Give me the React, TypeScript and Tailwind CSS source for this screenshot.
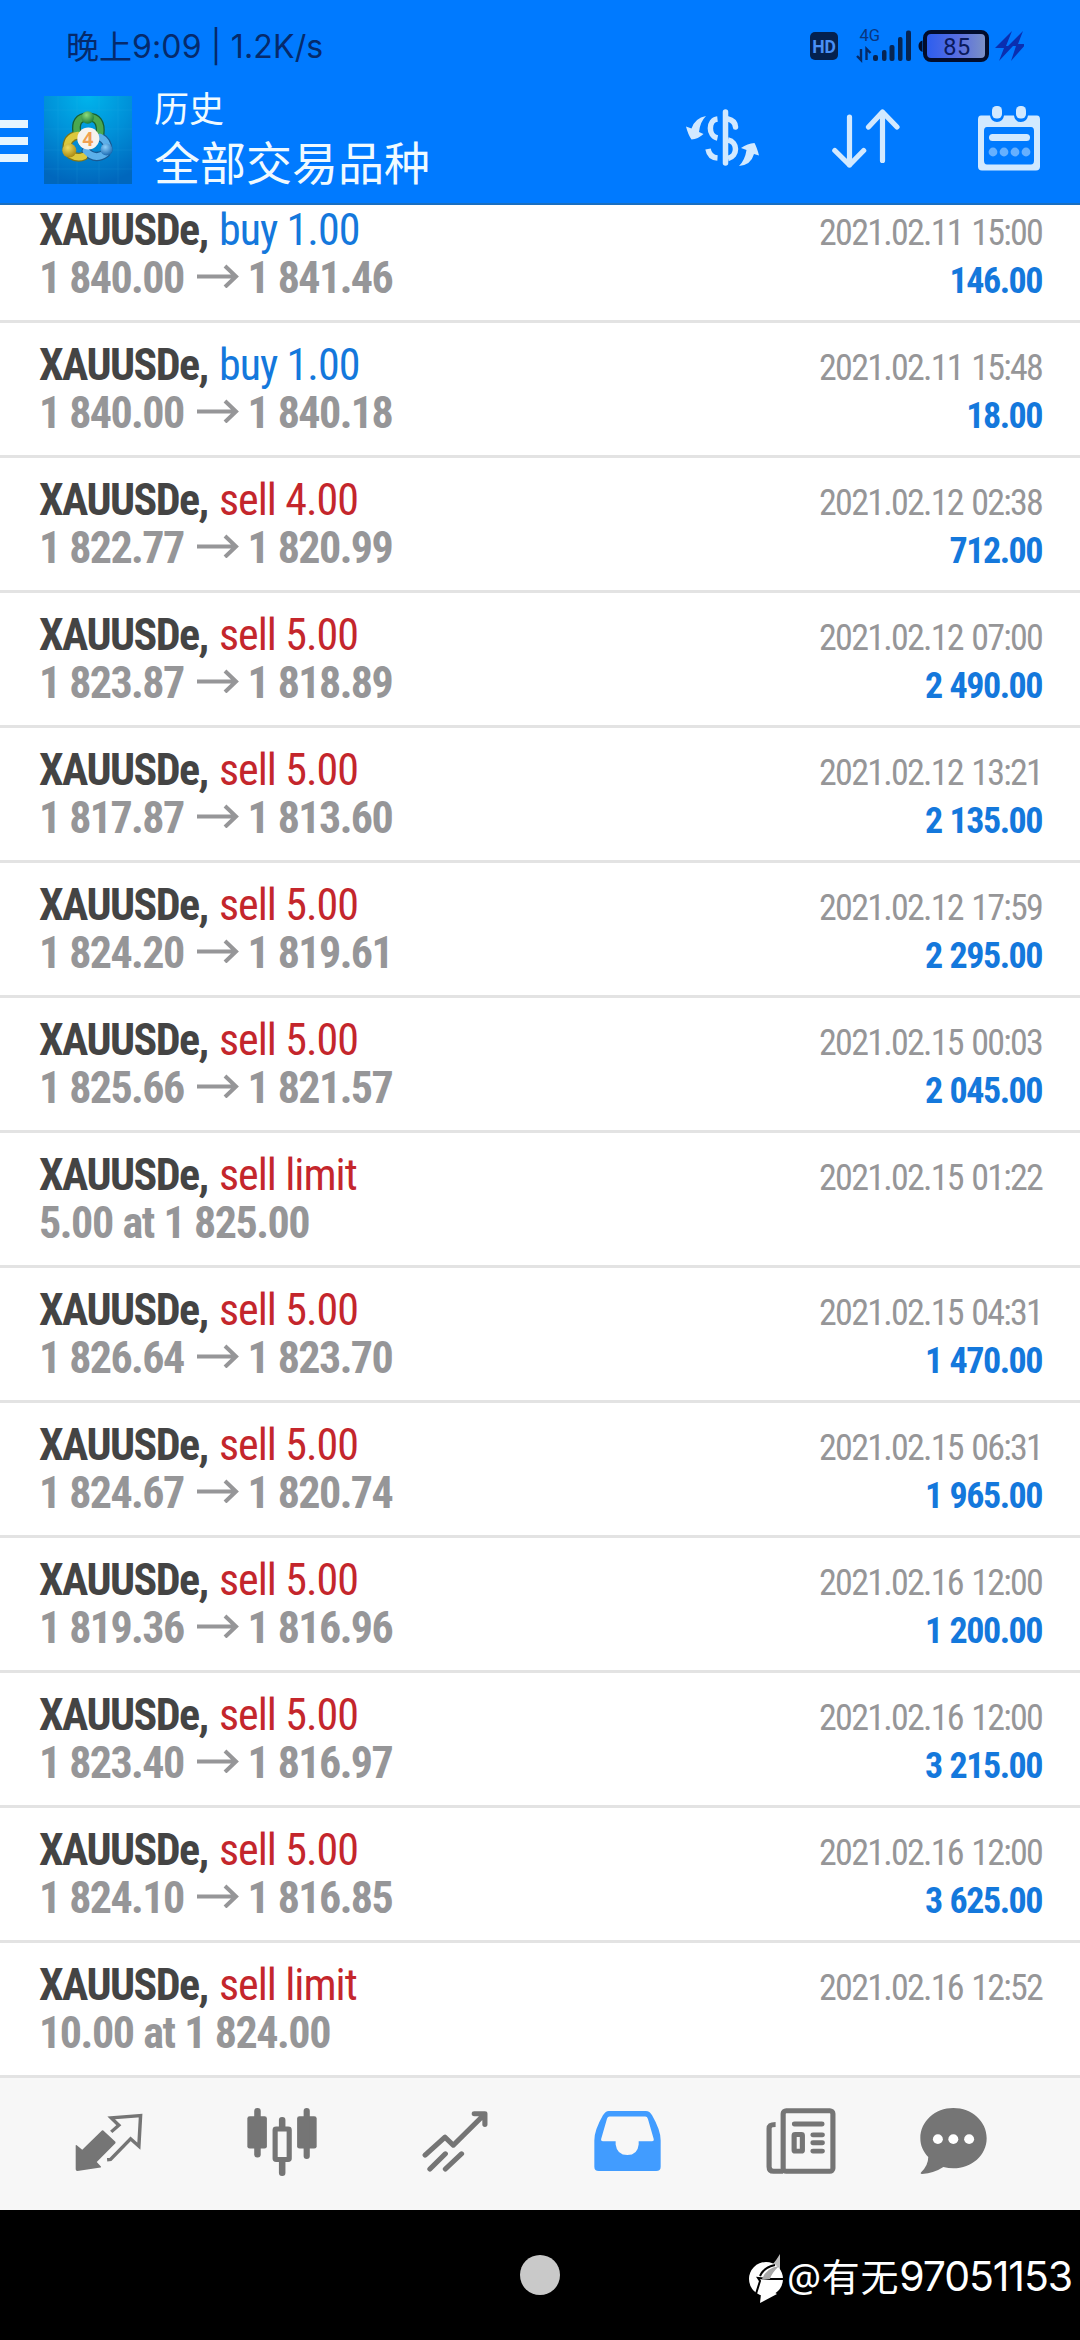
import React from 'react';

interface Deal {
  side: 'buy' | 'sell';
  label: string;
  from?: string;
  to?: string;
  note?: string;
  time: string;
  profit?: string;
}

const deals: Deal[] = [
  { side: 'buy', label: 'buy 1.00', from: '1 840.00', to: '1 841.46', time: '2021.02.11 15:00', profit: '146.00' },
  { side: 'buy', label: 'buy 1.00', from: '1 840.00', to: '1 840.18', time: '2021.02.11 15:48', profit: '18.00' },
  { side: 'sell', label: 'sell 4.00', from: '1 822.77', to: '1 820.99', time: '2021.02.12 02:38', profit: '712.00' },
  { side: 'sell', label: 'sell 5.00', from: '1 823.87', to: '1 818.89', time: '2021.02.12 07:00', profit: '2 490.00' },
  { side: 'sell', label: 'sell 5.00', from: '1 817.87', to: '1 813.60', time: '2021.02.12 13:21', profit: '2 135.00' },
  { side: 'sell', label: 'sell 5.00', from: '1 824.20', to: '1 819.61', time: '2021.02.12 17:59', profit: '2 295.00' },
  { side: 'sell', label: 'sell 5.00', from: '1 825.66', to: '1 821.57', time: '2021.02.15 00:03', profit: '2 045.00' },
  { side: 'sell', label: 'sell limit', note: '5.00 at 1 825.00', time: '2021.02.15 01:22' },
  { side: 'sell', label: 'sell 5.00', from: '1 826.64', to: '1 823.70', time: '2021.02.15 04:31', profit: '1 470.00' },
  { side: 'sell', label: 'sell 5.00', from: '1 824.67', to: '1 820.74', time: '2021.02.15 06:31', profit: '1 965.00' },
  { side: 'sell', label: 'sell 5.00', from: '1 819.36', to: '1 816.96', time: '2021.02.16 12:00', profit: '1 200.00' },
  { side: 'sell', label: 'sell 5.00', from: '1 823.40', to: '1 816.97', time: '2021.02.16 12:00', profit: '3 215.00' },
  { side: 'sell', label: 'sell 5.00', from: '1 824.10', to: '1 816.85', time: '2021.02.16 12:00', profit: '3 625.00' },
  { side: 'sell', label: 'sell limit', note: '10.00 at 1 824.00', time: '2021.02.16 12:52' },
];

function StatusIcons() {
  return (
    <svg width="216" height="40" viewBox="0 0 216 40" className="font-['Roboto','Noto_Sans_CJK_SC',sans-serif]">
      <defs>
        <linearGradient id="charge" x1="0" x2="1" y1="0" y2="0">
          <stop offset="0" stopColor="#2a5df0" />
          <stop offset="0.55" stopColor="#5a6fe0" />
          <stop offset="1" stopColor="#7d93c4" />
        </linearGradient>
      </defs>
      <rect x="2" y="5" width="28" height="28" rx="5" fill="#04214f" />
      <text x="16" y="25.500" fontSize="17.500" fontWeight="700" textAnchor="middle" fill="#4a90f5">HD</text>
      <text x="51.500" y="14" fontSize="16.500" fill="#0a3680">4G</text>
      <g stroke="#062a66" strokeWidth="2.400" fill="none">
        <path d="M53 22v11l-4-4M58.500 33v-11l4 4" />
      </g>
      <g fill="#062452">
        <rect x="65" y="28" width="5" height="6" rx="2" />
        <rect x="74" y="23" width="4.500" height="11" rx="2" />
        <rect x="81.500" y="18" width="5" height="16" rx="2" />
        <rect x="90" y="10" width="4.500" height="24" rx="2" />
        <rect x="98" y="3.500" width="5" height="30.500" rx="2" />
      </g>
      <path d="M114.500 13.500q-4 1-4 5.500t4 6z" fill="#020d2c" />
      <rect x="117" y="5" width="62" height="28" rx="6" fill="url(#charge)" stroke="#020d2c" strokeWidth="4" />
      <text x="149" y="27.500" fontSize="23.500" textAnchor="middle" fill="#0a1a5c" letterSpacing="0.500">85</text>
      <path d="M204 4l-17 17h9l-5 13 14-15h-7zM215 4l-15 15h8l-5 15 15-17h-8z" fill="#0a2fb0" />
    </svg>
  );
}

function AppLogo() {
  return (
    <svg width="88" height="88" viewBox="0 0 88 88">
      <defs>
        <radialGradient id="tile" cx="0.5" cy="0" r="1">
          <stop offset="0" stopColor="#00b4ec" />
          <stop offset="0.5" stopColor="#0090d8" />
          <stop offset="1" stopColor="#0067bd" />
        </radialGradient>
        <radialGradient id="greenBall" cx="0.4" cy="0.3" r="0.7">
          <stop offset="0" stopColor="#8fdc7c" />
          <stop offset="1" stopColor="#1c7d3c" />
        </radialGradient>
        <radialGradient id="goldBall" cx="0.4" cy="0.3" r="0.7">
          <stop offset="0" stopColor="#f0dc60" />
          <stop offset="1" stopColor="#a98a14" />
        </radialGradient>
        <radialGradient id="blueBall" cx="0.4" cy="0.3" r="0.7">
          <stop offset="0" stopColor="#8fd0fa" />
          <stop offset="1" stopColor="#1c6cb4" />
        </radialGradient>
      </defs>
      <rect width="88" height="88" fill="url(#tile)" />
      <path d="M14 0v88M33 0v88M55 0v88M74 0v88M0 14h88M0 33h88M0 54h88M0 73h88" stroke="#3cc0f0" strokeOpacity="0.12" />
      <g fill="none" strokeWidth="9" strokeLinecap="round">
        <path d="M33 37q-3-16 11-16t12 17" stroke="#175f34" />
        <path d="M34 39q-12 2-11 15M27 59q7 4 13 1" stroke="#7d7418" />
        <path d="M56 41q8 4 8 13M42 55q9 10 20 2" stroke="#185a94" />
      </g>
      <g fill="none" strokeWidth="6.500" strokeLinecap="round">
        <path d="M33 37q-3-16 11-16t12 17" stroke="#4aa850" />
        <path d="M34 39q-12 2-11 15M27 59q7 4 13 1" stroke="#dcc83c" />
        <path d="M56 41q8 4 8 13M42 55q9 10 20 2" stroke="#5cb0ea" />
      </g>
      <circle cx="43.700" cy="21.500" r="6.200" fill="url(#greenBall)" />
      <circle cx="25.300" cy="54.500" r="7" fill="url(#goldBall)" />
      <circle cx="62.500" cy="53.500" r="6" fill="url(#blueBall)" />
      <circle cx="44.300" cy="42.500" r="11" fill="#f6f2ee" />
      <text x="44" y="49.500" fontSize="19" fontWeight="700" textAnchor="middle" fill="#f0a050" className="font-['Open_Sans',sans-serif]">4</text>
    </svg>
  );
}

function CurrencyIcon() {
  return (
    <svg width="73" height="57" viewBox="0 0 73 57">
      <g fill="none" stroke="#d2e9ff" strokeWidth="5.500">
        <path d="M39.500 3v51" strokeLinecap="round" />
        <path d="M31.500 10c-9.500 1-9.500 17 0 19" />
        <path d="M42 10q7 1.500 7.500 8" strokeLinecap="round" />
        <path d="M22 40q1.500 8.500 9.500 9" />
        <path d="M42 31c10 2 10 16 0 18.500" />
      </g>
      <path d="M20 7Q9 9 5.500 19.500L0 17.500q2 8 5.500 13Q12 30 17.500 25l-4.500-2Q14 13 20 7zM53 57q12-1 15-12l5 1.500q-2-8-4.500-12.500-7 .5-13.500 5l5.500 2Q59 51 53 57z" fill="#d2e9ff" />
    </svg>
  );
}

function SortIcon() {
  return (
    <svg width="68" height="60" viewBox="0 0 68 60" fill="none" stroke="#d2e9ff" strokeWidth="5.200" strokeLinecap="round" strokeLinejoin="round">
      <path d="M17.500 8v48M2.800 41.500l14.700 14.500 14.200-14.500" />
      <path d="M50.500 51.500V3M36.500 18l14-15 14.500 15" />
    </svg>
  );
}

function CalendarIcon() {
  return (
    <svg width="64" height="65" viewBox="0 0 64 65">
      <path fillRule="evenodd" fill="#d2e9ff" d="M4 9.500h9q1 6.500 7 6.500t7-6.500h10q1 6.500 7 6.500t7-6.500h9q3 0 3 4v47q0 4-4 4H5q-4 0-4-4v-47q0-4 3-4zM10 21q-3 0-3 4v29.500q0 4 3 4h44q3 0 3-4V25q0-4-3-4z" />
      <rect x="15" y="0" width="10" height="12.500" rx="4.500" fill="#d2e9ff" />
      <rect x="39" y="0" width="10" height="12.500" rx="4.500" fill="#d2e9ff" />
      <rect x="12" y="28" width="41" height="7" rx="3.500" fill="#d2e9ff" />
      <g fill="#66b0ff">
        <circle cx="16" cy="46" r="4.400" />
        <circle cx="27" cy="46" r="4.400" />
        <circle cx="38" cy="46" r="4.400" />
        <circle cx="49" cy="46" r="4.400" />
      </g>
    </svg>
  );
}

function Header() {
  return (
    <header className="flex h-[205px] shrink-0 flex-col border-b-2 border-[#1a6fc0] bg-[#007aff]">
      <div className="flex h-[92px] shrink-0 items-start justify-between pl-[66px] pr-[56px] pt-[27px]">
        <div className="flex font-['Inter','Noto_Sans_CJK_SC',sans-serif] text-[32px] leading-[40px] text-[#052a6c] whitespace-pre">
          <span className="text-[33px]">晚上</span>
          <span className="tracking-[0.15px]">9:09 | 1.2K/s</span>
        </div>
        <StatusIcons />
      </div>
      <div className="flex h-[111px] items-start">
        <div className="mt-[28px] flex w-[28px] flex-col gap-[9px]">
          <div className="h-[8px] bg-[#e6f5ff]" />
          <div className="h-[8px] bg-[#e6f5ff]" />
          <div className="h-[8px] bg-[#e6f5ff]" />
        </div>
        <div className="ml-4 mt-[4px]">
          <AppLogo />
        </div>
        <div className="-mt-[4px] ml-[22px] font-['Noto_Sans_CJK_SC',sans-serif] text-[#f0faff]">
          <div className="text-[35px] leading-[38px]">历史</div>
          <div className="mt-[4px] text-[46px] leading-[60px]">全部交易品种</div>
        </div>
        <div className="ml-auto mr-[39px] mt-[14px] flex items-start">
          <div className="mr-[73px] mt-[3px]"><CurrencyIcon /></div>
          <div className="mr-[77px] mt-[3px]"><SortIcon /></div>
          <CalendarIcon />
        </div>
      </div>
    </header>
  );
}

function DealRow({ deal }: { deal: Deal }) {
  return (
    <div className="flex h-[135px] shrink-0 justify-between border-b-[3px] border-[#e3e3e3] pl-[39px] pr-[38px] whitespace-nowrap">
      <div className="pt-[18px] text-[44px] leading-[48px]">
        <div>
          <span className="mr-px font-bold tracking-[-1.55px] text-[#444444]">XAUUSDe,</span>{' '}
          <span className={`tracking-[-0.95px] ${deal.side === 'buy' ? 'text-[#1478dc]' : 'text-[#c4262c]'}`}>{deal.label}</span>
        </div>
        {deal.note ? (
          <div className="font-bold tracking-[-1.45px] [word-spacing:1px] text-[#969698]">{deal.note}</div>
        ) : (
          <div className="flex items-start font-bold text-[#969698]">
            <span className="tracking-[-1.6px] [word-spacing:1px]">{deal.from}</span>
            <svg width="42" height="24" viewBox="0 0 42 24" className="ml-[13px] mr-[9px] mt-[10px]" fill="none" stroke="#969698" strokeWidth="4">
              <path d="M0 12.500h39M28 2l11 10.500L28 23" />
            </svg>
            <span className="tracking-[-1.6px] [word-spacing:1px]">{deal.to}</span>
          </div>
        )}
      </div>
      <div className="pt-[21px] text-right text-[36px] leading-[48px]">
        <div className="tracking-[-1.75px] [word-spacing:2px] text-[#969698]">{deal.time}</div>
        {deal.profit && <div className="font-bold tracking-[-1.5px] [word-spacing:1px] text-[#1478dc]">{deal.profit}</div>}
      </div>
    </div>
  );
}

const navIcons = [
  // quotes
  <svg width="68" height="68" viewBox="217 143 197 205" preserveAspectRatio="none" fill="#757575">
    <path d="M219 256q0-3 3-1l16 14 57-58q2-2 4 0l35 34q1 2 0 4l-54 57 12 13q2 2-1 3l-67 11q-5 0-5-5z" />
    <path d="M310 299l10-1 58-62 24 22 5-92-85 7 22 22-22 20" fill="none" stroke="#757575" strokeWidth="10" strokeLinejoin="miter" />
  </svg>,
  // chart
  <svg width="70" height="68" viewBox="714 143 204 205" preserveAspectRatio="none" fill="#757575">
    <rect x="715" y="168" width="57" height="97" rx="7" />
    <rect x="735" y="143" width="19" height="149" rx="9" />
    <rect x="860" y="168" width="57" height="97" rx="7" />
    <rect x="879" y="143" width="18" height="154" rx="9" />
    <rect x="807" y="170" width="19" height="40" rx="9" />
    <rect x="807" y="295" width="19" height="53" rx="9" />
    <rect x="796" y="206" width="41" height="92" rx="3" fill="#f7f7f7" stroke="#757575" strokeWidth="15" />
  </svg>,
  // trade
  <svg width="66" height="68" viewBox="1222 143 192 205" preserveAspectRatio="none" fill="none" stroke="#757575" strokeWidth="15" strokeLinecap="round" strokeLinejoin="round">
    <path d="M1231 285l58-54 24 24 91-93M1374 160h31v33M1245 327l45-46M1290 327l47-46" />
  </svg>,
  // history
  <svg width="67" height="68" viewBox="157 143 195 205" preserveAspectRatio="none">
    <path fillRule="evenodd" fill="#419cff" d="M200 152h108q11 0 18 13 25 45 25 75v80q0 13-13 13H171q-13 0-13-13v-80q0-30 25-75 8-13 17-13zM202 169q-5 0-7 6l-17 61q-2 7 5 7h37v10q4 32 34 32t33-32v-10h39q6 0 5-6l-17-61q-2-7-8-7z" />
  </svg>,
  // news
  <svg width="70" height="68" viewBox="656 143 204 205" preserveAspectRatio="none" fill="none" stroke="#757575" strokeWidth="15" strokeLinecap="round" strokeLinejoin="round">
    <rect x="706" y="151" width="145" height="183" rx="9" />
    <path d="M706 334h-28q-13 0-13-14V205q0-12 19-12" strokeLinecap="butt" />
    <path d="M739 191h80M793 224h27M793 248h27M793 273h27" />
    <rect x="738" y="223" width="24" height="50" rx="3" />
  </svg>,
  // messages
  <svg width="67" height="68" viewBox="1102 143 195 205" preserveAspectRatio="none">
    <path d="M1199 143c54 0 97 40 97 91s-43 91-97 91q-14 0-29-4-26 18-62 21-7-1-2-6 20-20 20-45c-15-17-23-35-23-57 0-51 43-91 96-91z" fill="#757575" />
    <g fill="#fff">
      <circle cx="1154" cy="237" r="14.500" />
      <circle cx="1199" cy="237" r="14.500" />
      <circle cx="1245" cy="237" r="14.500" />
    </g>
  </svg>,
];

function TabBar() {
  return (
    <nav className="flex h-[132px] shrink-0 bg-[#f7f7f7] pl-[22px] pt-[30px]">
      {navIcons.map((icon, i) => (
        <div key={i} className="flex w-[173px] shrink-0 justify-center last:w-[132px]">
          {icon}
        </div>
      ))}
    </nav>
  );
}

function SystemBar() {
  return (
    <div className="grid h-[130px] shrink-0 grid-cols-[1fr_40px_1fr] bg-black">
      <div />
      <div className="mt-[45px] size-10 rounded-full bg-[#c9c9c9]" />
      <div className="mt-[38px] flex items-start justify-end pr-[8px]">
        <svg width="37" height="50" viewBox="0 0 37 50" className="mr-[2px] mt-[6px]">
          <path d="M32 0v22H13Q25 12 32 0z" fill="#bdbdbd" />
          <circle cx="18" cy="25" r="17" fill="#fff" />
          <path d="M12 49l2-18 15 9z" fill="#fff" />
          <path d="M7 43l5-16-2-3 12 1h15" fill="none" stroke="#000" strokeWidth="2" />
          <path d="M14 25q4-11 17-13-8 8-9 13z" fill="#a8a8a8" />
          <path d="M12 22q4-9 15-11" fill="none" stroke="#000" strokeWidth="2" />
        </svg>
        <div className="flex font-['Noto_Sans','Noto_Sans_CJK_SC',sans-serif] text-[38px] leading-[56px] text-white whitespace-nowrap">
          <span className="tracking-[0.7px]">@有无</span>
          <span className="font-['Inter',sans-serif] text-[41px] tracking-[-1.1px]">97051153</span>
        </div>
      </div>
    </div>
  );
}

export default function App() {
  return (
    <div className="flex h-[2340px] w-[1080px] flex-col overflow-hidden bg-white font-['Roboto_Condensed','Roboto',sans-serif]">
      <Header />
      <main className="flex h-[1873px] shrink-0 flex-col justify-end overflow-hidden bg-white">
        {deals.map((deal, i) => (
          <DealRow key={i} deal={deal} />
        ))}
      </main>
      <TabBar />
      <SystemBar />
    </div>
  );
}
